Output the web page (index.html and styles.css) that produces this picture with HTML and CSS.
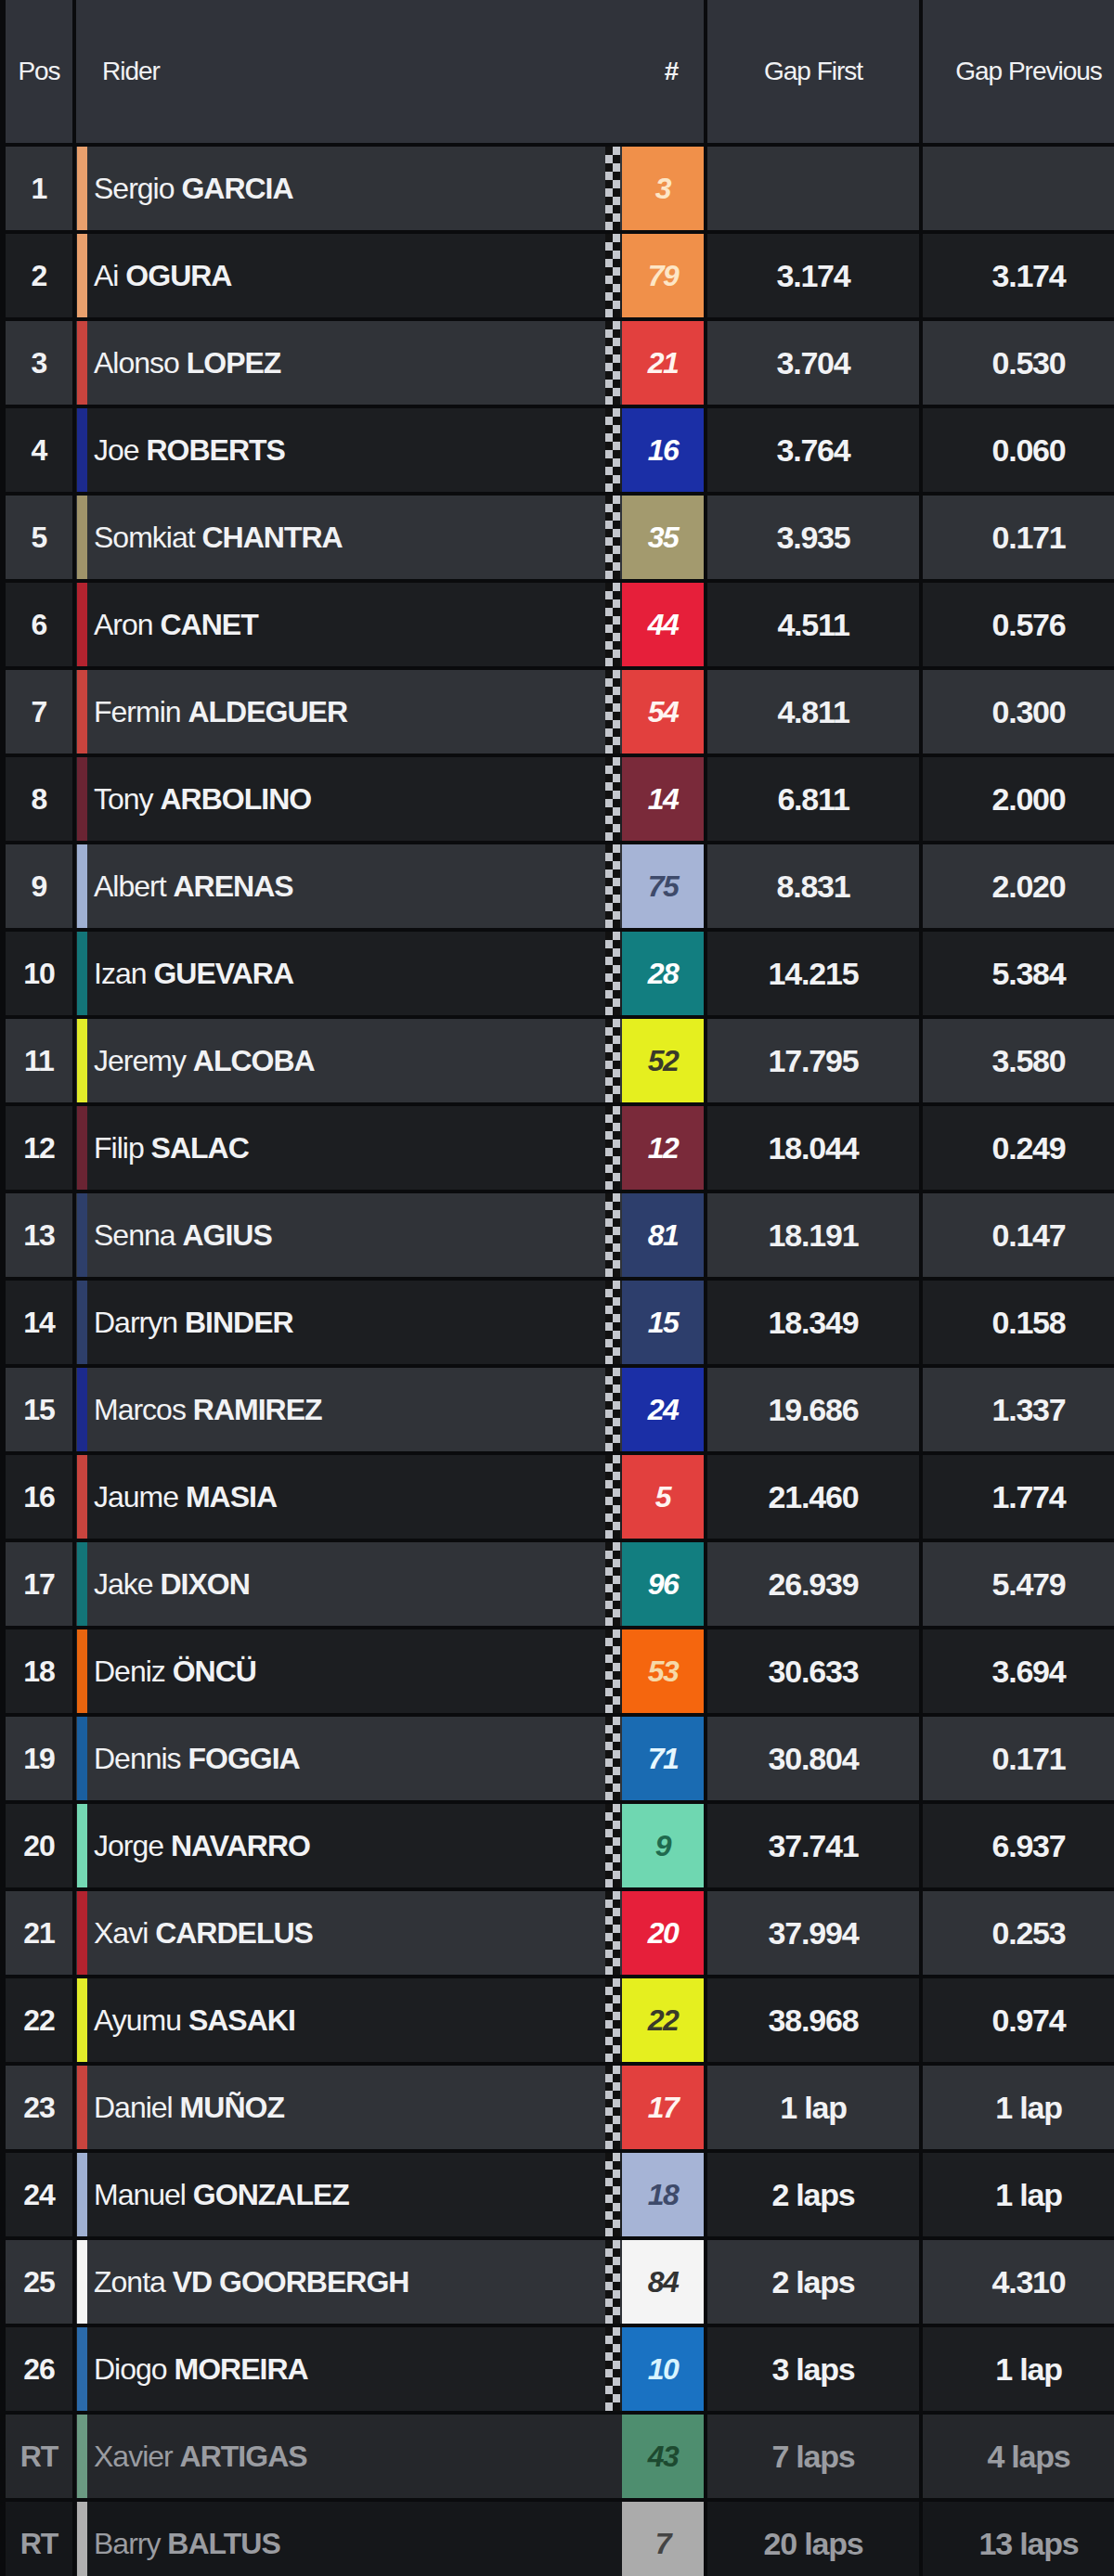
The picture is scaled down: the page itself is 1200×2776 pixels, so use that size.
FILE: index.html
```html
<!DOCTYPE html>
<html lang="en">
<head>
<meta charset="utf-8">
<title>Moto2 Results</title>
<link rel="stylesheet" href="styles.css">
</head>
<body>
<div class="board">
  <div class="row head">
    <div class="c pos">Pos</div>
    <div class="c rider"><span class="hname">Rider</span><span class="hnum">#</span></div>
    <div class="c gap">Gap First</div>
    <div class="c gap">Gap Previous</div>
  </div>

  <div class="row odd t-msi">
    <div class="c pos">1</div>
    <div class="c rider"><span class="stripe"></span><span class="name">Sergio&nbsp;<b>GARCIA</b></span><span class="flag"></span><span class="num">3</span></div>
    <div class="c gap"></div><div class="c gap"></div>
  </div>
  <div class="row even t-msi">
    <div class="c pos">2</div>
    <div class="c rider"><span class="stripe"></span><span class="name">Ai&nbsp;<b>OGURA</b></span><span class="flag"></span><span class="num">79</span></div>
    <div class="c gap">3.174</div><div class="c gap">3.174</div>
  </div>
  <div class="row odd t-red">
    <div class="c pos">3</div>
    <div class="c rider"><span class="stripe"></span><span class="name">Alonso&nbsp;<b>LOPEZ</b></span><span class="flag"></span><span class="num">21</span></div>
    <div class="c gap">3.704</div><div class="c gap">0.530</div>
  </div>
  <div class="row even t-blue">
    <div class="c pos">4</div>
    <div class="c rider"><span class="stripe"></span><span class="name">Joe&nbsp;<b>ROBERTS</b></span><span class="flag"></span><span class="num">16</span></div>
    <div class="c gap">3.764</div><div class="c gap">0.060</div>
  </div>
  <div class="row odd t-khaki">
    <div class="c pos">5</div>
    <div class="c rider"><span class="stripe"></span><span class="name">Somkiat&nbsp;<b>CHANTRA</b></span><span class="flag"></span><span class="num">35</span></div>
    <div class="c gap">3.935</div><div class="c gap">0.171</div>
  </div>
  <div class="row even t-crimson">
    <div class="c pos">6</div>
    <div class="c rider"><span class="stripe"></span><span class="name">Aron&nbsp;<b>CANET</b></span><span class="flag"></span><span class="num">44</span></div>
    <div class="c gap">4.511</div><div class="c gap">0.576</div>
  </div>
  <div class="row odd t-red">
    <div class="c pos">7</div>
    <div class="c rider"><span class="stripe"></span><span class="name">Fermin&nbsp;<b>ALDEGUER</b></span><span class="flag"></span><span class="num">54</span></div>
    <div class="c gap">4.811</div><div class="c gap">0.300</div>
  </div>
  <div class="row even t-maroon">
    <div class="c pos">8</div>
    <div class="c rider"><span class="stripe"></span><span class="name">Tony&nbsp;<b>ARBOLINO</b></span><span class="flag"></span><span class="num">14</span></div>
    <div class="c gap">6.811</div><div class="c gap">2.000</div>
  </div>
  <div class="row odd t-sky">
    <div class="c pos">9</div>
    <div class="c rider"><span class="stripe"></span><span class="name">Albert&nbsp;<b>ARENAS</b></span><span class="flag"></span><span class="num">75</span></div>
    <div class="c gap">8.831</div><div class="c gap">2.020</div>
  </div>
  <div class="row even t-teal">
    <div class="c pos">10</div>
    <div class="c rider"><span class="stripe"></span><span class="name">Izan&nbsp;<b>GUEVARA</b></span><span class="flag"></span><span class="num">28</span></div>
    <div class="c gap">14.215</div><div class="c gap">5.384</div>
  </div>
  <div class="row odd t-yellow">
    <div class="c pos">11</div>
    <div class="c rider"><span class="stripe"></span><span class="name">Jeremy&nbsp;<b>ALCOBA</b></span><span class="flag"></span><span class="num">52</span></div>
    <div class="c gap">17.795</div><div class="c gap">3.580</div>
  </div>
  <div class="row even t-maroon">
    <div class="c pos">12</div>
    <div class="c rider"><span class="stripe"></span><span class="name">Filip&nbsp;<b>SALAC</b></span><span class="flag"></span><span class="num">12</span></div>
    <div class="c gap">18.044</div><div class="c gap">0.249</div>
  </div>
  <div class="row odd t-navy">
    <div class="c pos">13</div>
    <div class="c rider"><span class="stripe"></span><span class="name">Senna&nbsp;<b>AGIUS</b></span><span class="flag"></span><span class="num">81</span></div>
    <div class="c gap">18.191</div><div class="c gap">0.147</div>
  </div>
  <div class="row even t-navy">
    <div class="c pos">14</div>
    <div class="c rider"><span class="stripe"></span><span class="name">Darryn&nbsp;<b>BINDER</b></span><span class="flag"></span><span class="num">15</span></div>
    <div class="c gap">18.349</div><div class="c gap">0.158</div>
  </div>
  <div class="row odd t-blue">
    <div class="c pos">15</div>
    <div class="c rider"><span class="stripe"></span><span class="name">Marcos&nbsp;<b>RAMIREZ</b></span><span class="flag"></span><span class="num">24</span></div>
    <div class="c gap">19.686</div><div class="c gap">1.337</div>
  </div>
  <div class="row even t-red">
    <div class="c pos">16</div>
    <div class="c rider"><span class="stripe"></span><span class="name">Jaume&nbsp;<b>MASIA</b></span><span class="flag"></span><span class="num">5</span></div>
    <div class="c gap">21.460</div><div class="c gap">1.774</div>
  </div>
  <div class="row odd t-teal">
    <div class="c pos">17</div>
    <div class="c rider"><span class="stripe"></span><span class="name">Jake&nbsp;<b>DIXON</b></span><span class="flag"></span><span class="num">96</span></div>
    <div class="c gap">26.939</div><div class="c gap">5.479</div>
  </div>
  <div class="row even t-orange">
    <div class="c pos">18</div>
    <div class="c rider"><span class="stripe"></span><span class="name">Deniz&nbsp;<b>ÖNCÜ</b></span><span class="flag"></span><span class="num">53</span></div>
    <div class="c gap">30.633</div><div class="c gap">3.694</div>
  </div>
  <div class="row odd t-azure">
    <div class="c pos">19</div>
    <div class="c rider"><span class="stripe"></span><span class="name">Dennis&nbsp;<b>FOGGIA</b></span><span class="flag"></span><span class="num">71</span></div>
    <div class="c gap">30.804</div><div class="c gap">0.171</div>
  </div>
  <div class="row even t-mint">
    <div class="c pos">20</div>
    <div class="c rider"><span class="stripe"></span><span class="name">Jorge&nbsp;<b>NAVARRO</b></span><span class="flag"></span><span class="num">9</span></div>
    <div class="c gap">37.741</div><div class="c gap">6.937</div>
  </div>
  <div class="row odd t-crimson">
    <div class="c pos">21</div>
    <div class="c rider"><span class="stripe"></span><span class="name">Xavi&nbsp;<b>CARDELUS</b></span><span class="flag"></span><span class="num">20</span></div>
    <div class="c gap">37.994</div><div class="c gap">0.253</div>
  </div>
  <div class="row even t-yellow">
    <div class="c pos">22</div>
    <div class="c rider"><span class="stripe"></span><span class="name">Ayumu&nbsp;<b>SASAKI</b></span><span class="flag"></span><span class="num">22</span></div>
    <div class="c gap">38.968</div><div class="c gap">0.974</div>
  </div>
  <div class="row odd t-red">
    <div class="c pos">23</div>
    <div class="c rider"><span class="stripe"></span><span class="name">Daniel&nbsp;<b>MUÑOZ</b></span><span class="flag"></span><span class="num">17</span></div>
    <div class="c gap">1 lap</div><div class="c gap">1 lap</div>
  </div>
  <div class="row even t-sky">
    <div class="c pos">24</div>
    <div class="c rider"><span class="stripe"></span><span class="name">Manuel&nbsp;<b>GONZALEZ</b></span><span class="flag"></span><span class="num">18</span></div>
    <div class="c gap">2 laps</div><div class="c gap">1 lap</div>
  </div>
  <div class="row odd t-white">
    <div class="c pos">25</div>
    <div class="c rider"><span class="stripe"></span><span class="name">Zonta&nbsp;<b>VD GOORBERGH</b></span><span class="flag"></span><span class="num">84</span></div>
    <div class="c gap">2 laps</div><div class="c gap">4.310</div>
  </div>
  <div class="row even t-azure2">
    <div class="c pos">26</div>
    <div class="c rider"><span class="stripe"></span><span class="name">Diogo&nbsp;<b>MOREIRA</b></span><span class="flag"></span><span class="num">10</span></div>
    <div class="c gap">3 laps</div><div class="c gap">1 lap</div>
  </div>
  <div class="row odd rt t-green">
    <div class="c pos">RT</div>
    <div class="c rider"><span class="stripe"></span><span class="name">Xavier&nbsp;<b>ARTIGAS</b></span><span class="flag"></span><span class="num">43</span></div>
    <div class="c gap">7 laps</div><div class="c gap">4 laps</div>
  </div>
  <div class="row even rt t-gray">
    <div class="c pos">RT</div>
    <div class="c rider"><span class="stripe"></span><span class="name">Barry&nbsp;<b>BALTUS</b></span><span class="flag"></span><span class="num">7</span></div>
    <div class="c gap">20 laps</div><div class="c gap">13 laps</div>
  </div>
</div>
</body>
</html>
```

FILE: styles.css
```css
html, body {
  margin: 0;
  padding: 0;
}
body {
  width: 1200px;
  height: 2776px;
  overflow: hidden;
  background: #0a0b0d;
  font-family: "Liberation Sans", Arial, sans-serif;
  color: #f1f2f4;
}
.board {
  width: 1232px;
  padding-left: 6px;
  display: flex;
  flex-direction: column;
  row-gap: 4px;
  background: #0a0b0d;
}
.row {
  display: grid;
  grid-template-columns: 72px 676px 228px 228px;
  column-gap: 4px;
  height: 90px;
  flex: none;
}
.row.head { height: 154px; --bg: #30333a; }
.row.odd { --bg: #303338; }
.row.even { --bg: #1c1e21; }
.row.rt.odd { --bg: #25272b; }
.row.rt.even { --bg: #15171a; }

.c {
  background: var(--bg);
  display: flex;
  align-items: center;
  justify-content: center;
  min-width: 0;
}
.pos {
  font-size: 32px;
  font-weight: 700;
  letter-spacing: -1px;
}
.gap {
  font-size: 34px;
  font-weight: 700;
  letter-spacing: -1.2px;
}
.head .c {
  font-size: 28px;
  font-weight: 400;
  letter-spacing: -1px;
}
.rider {
  justify-content: flex-start;
  align-items: stretch;
}
.hname {
  flex: 1;
  display: flex;
  align-items: center;
  padding-left: 28px;
}
.hnum {
  width: 88px;
  display: flex;
  align-items: center;
  justify-content: center;
  padding-left: 18px;
  box-sizing: border-box;
  font-weight: 700;
}
.stripe {
  width: 11px;
  margin-left: 1px;
  background: var(--stripe);
}
.name {
  flex: 1;
  display: flex;
  align-items: center;
  padding-left: 7px;
  font-size: 32px;
  letter-spacing: -1px;
  white-space: nowrap;
}
.name b { font-weight: 700; }
.flag {
  width: 16px;
  margin-right: 2px;
  background-color: #111;
  background-image: conic-gradient(#c4c7cd 0 90deg, #111 90deg 180deg, #c4c7cd 180deg 270deg, #111 270deg 360deg);
  background-size: 16px 18px;
}
.num {
  width: 88px;
  display: flex;
  align-items: center;
  justify-content: center;
  font-size: 32px;
  font-weight: 700;
  font-style: italic;
  letter-spacing: -1.5px;
  background: var(--team);
  color: var(--team-text);
}

.rt { color: #9a9ca1; }
.rt .flag { visibility: hidden; }

.t-msi { --team: #f0904a; --team-text: #fde6c6; --stripe: #e9a06d; }
.t-red { --team: #e2403e; --team-text: #fff4f0; --stripe: #c8443e; }
.t-blue { --team: #1b2fa6; --team-text: #ffffff; --stripe: #1c2a8c; }
.t-khaki { --team: #a39a6e; --team-text: #ffffff; --stripe: #a0946a; }
.t-crimson { --team: #e61f3a; --team-text: #ffffff; --stripe: #b3232f; }
.t-maroon { --team: #7a2a3a; --team-text: #ffffff; --stripe: #6a2433; }
.t-sky { --team: #a6b4d6; --team-text: #3e4a6a; --stripe: #9fb0d2; }
.t-teal { --team: #127e80; --team-text: #ffffff; --stripe: #137578; }
.t-yellow { --team: #e5ef1f; --team-text: #3a3a2a; --stripe: #e2ec2a; }
.t-navy { --team: #2d3e6c; --team-text: #ffffff; --stripe: #2e3f6a; }
.t-orange { --team: #f5660e; --team-text: #f6d9a8; --stripe: #e8650f; }
.t-azure { --team: #1a6bb2; --team-text: #e6f7ff; --stripe: #1a5f9f; }
.t-azure2 { --team: #1a72c2; --team-text: #d8f4ff; --stripe: #2b6aaa; }
.t-mint { --team: #6fd7b1; --team-text: #1f6a4e; --stripe: #74d8b3; }
.t-white { --team: #f4f4f4; --team-text: #333333; --stripe: #f5f5f5; }
.t-green { --team: #4e8e6f; --team-text: #1d4a30; --stripe: #6b9a82; }
.t-gray { --team: #ababab; --team-text: #444444; --stripe: #b0b0b0; }
```
